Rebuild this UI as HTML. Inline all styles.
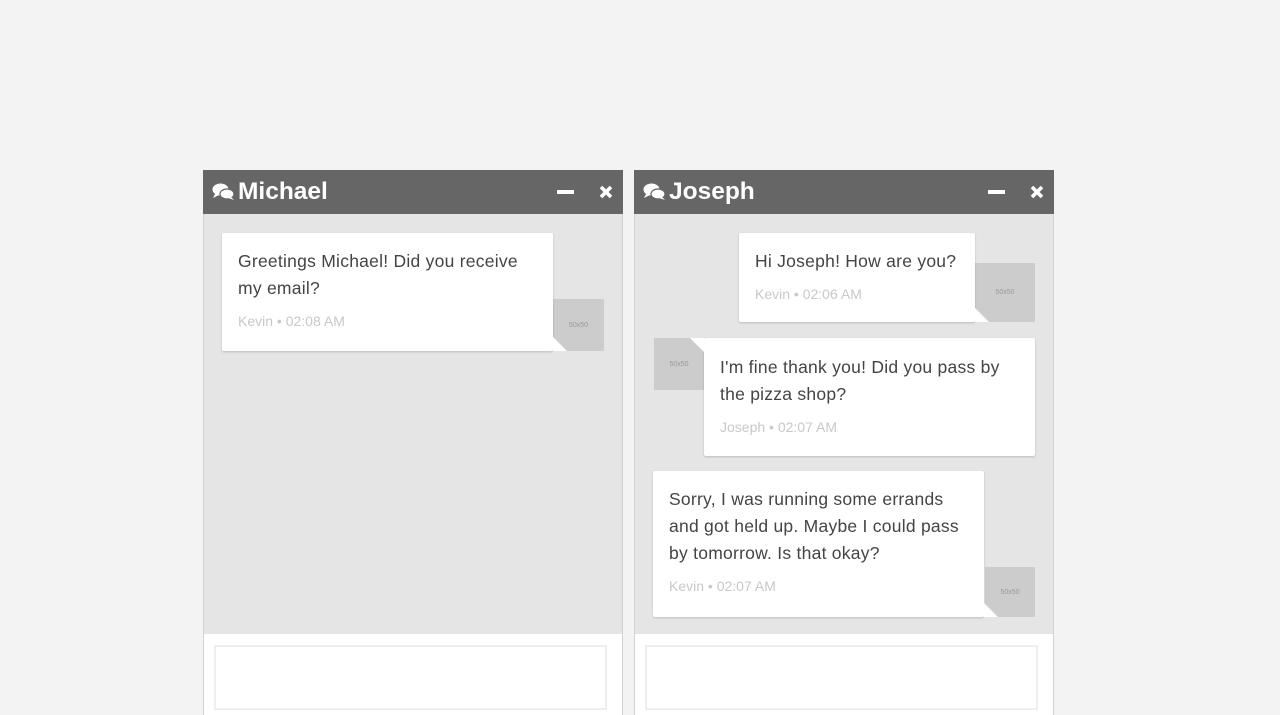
<!DOCTYPE html>
<html><head><style>
*{margin:0;padding:0;box-sizing:border-box}
body{width:1280px;height:715px;background:#f3f3f3;position:relative;overflow:hidden;font-family:"Liberation Sans",sans-serif}
.panel{position:absolute;top:170px;width:420px;height:545px;background:#e5e5e5;border-left:1px solid #d2d2d2;border-right:1px solid #d2d2d2}
.hd{position:absolute;left:-1px;top:0;width:420px;height:44px;background:#666;color:#fff;font-weight:bold;font-size:24.5px}
.hd .t{position:absolute;left:35px;top:8px}
.ta{position:absolute;left:10px;right:15px;top:11px;height:65px;border:2px solid #eee}
.b{position:absolute;background:#fff;border-radius:2px;box-shadow:0 1px 2px rgba(0,0,0,.18);color:#444;font-size:17.5px;line-height:27px;padding:15px 0 0 16px;white-space:nowrap;letter-spacing:0.25px}
.m{font-size:14px;color:#c8c8c8;margin-top:6px;letter-spacing:0}
.av{position:absolute;background:#ccc;color:#999;font-size:7px;display:flex;align-items:center;justify-content:center}
.tri{position:absolute;width:0;height:0;border-bottom:14px solid #fff;border-right:14px solid transparent}
.tril{position:absolute;width:0;height:0;border-top:14px solid #fff;border-left:14px solid transparent}
</style></head><body>

<div class="panel" style="left:203px">
 <div class="hd">
  <svg style="position:absolute;left:9px;top:13px" width="23" height="18" viewBox="0 0 23 18"><ellipse cx="8.5" cy="6.5" rx="8" ry="6" fill="#fff"/><path d="M3 11 L1 15 L7 12Z" fill="#fff"/><ellipse cx="15" cy="11" rx="7" ry="5" fill="#fff" stroke="#666" stroke-width="1.2"/><path d="M19 14 L22 17 L16 15Z" fill="#fff"/></svg>
  <span class="t">Michael</span>
  <div style="position:absolute;left:354px;top:20px;width:17px;height:4px;background:#fff"></div>
  <svg style="position:absolute;left:396px;top:15px" width="14" height="14" viewBox="0 0 14 14"><path d="M2 2L12 12M12 2L2 12" stroke="#fff" stroke-width="3.6"/></svg>
 </div>
</div>
<div class="av" style="left:553px;top:299px;width:51px;height:52px">50x50</div>
<div class="b" style="left:222px;top:233px;width:331px;height:118px">Greetings Michael! Did you receive<br>my email?<div class="m">Kevin • 02:08 AM</div></div>
<div class="tri" style="left:553px;top:337px"></div>
<div style="position:absolute;left:203px;top:634px;width:420px;height:81px;background:#fff;border-left:1px solid #d2d2d2;border-right:1px solid #d2d2d2"><div class="ta"></div></div>

<div class="panel" style="left:634px">
 <div class="hd">
  <svg style="position:absolute;left:9px;top:13px" width="23" height="18" viewBox="0 0 23 18"><ellipse cx="8.5" cy="6.5" rx="8" ry="6" fill="#fff"/><path d="M3 11 L1 15 L7 12Z" fill="#fff"/><ellipse cx="15" cy="11" rx="7" ry="5" fill="#fff" stroke="#666" stroke-width="1.2"/><path d="M19 14 L22 17 L16 15Z" fill="#fff"/></svg>
  <span class="t">Joseph</span>
  <div style="position:absolute;left:354px;top:20px;width:17px;height:4px;background:#fff"></div>
  <svg style="position:absolute;left:396px;top:15px" width="14" height="14" viewBox="0 0 14 14"><path d="M2 2L12 12M12 2L2 12" stroke="#fff" stroke-width="3.6"/></svg>
 </div>
</div>
<div class="av" style="left:975px;top:263px;width:60px;height:59px">50x50</div>
<div class="b" style="left:739px;top:233px;width:236px;height:89px">Hi Joseph! How are you?<div class="m">Kevin • 02:06 AM</div></div>
<div class="tri" style="left:975px;top:308px"></div>

<div class="av" style="left:654px;top:338px;width:50px;height:52px">50x50</div>
<div class="b" style="left:704px;top:338px;width:331px;height:118px;padding-top:16px">I'm fine thank you! Did you pass by<br>the pizza shop?<div class="m">Joseph • 02:07 AM</div></div>
<div class="tril" style="left:690px;top:338px"></div>

<div class="av" style="left:985px;top:567px;width:50px;height:50px">50x50</div>
<div class="b" style="left:653px;top:471px;width:331px;height:146px">Sorry, I was running some errands<br>and got held up. Maybe I could pass<br>by tomorrow. Is that okay?<div class="m">Kevin • 02:07 AM</div></div>
<div class="tri" style="left:984px;top:603px"></div>
<div style="position:absolute;left:634px;top:634px;width:420px;height:81px;background:#fff;border-left:1px solid #d2d2d2;border-right:1px solid #d2d2d2"><div class="ta"></div></div>
</body></html>
